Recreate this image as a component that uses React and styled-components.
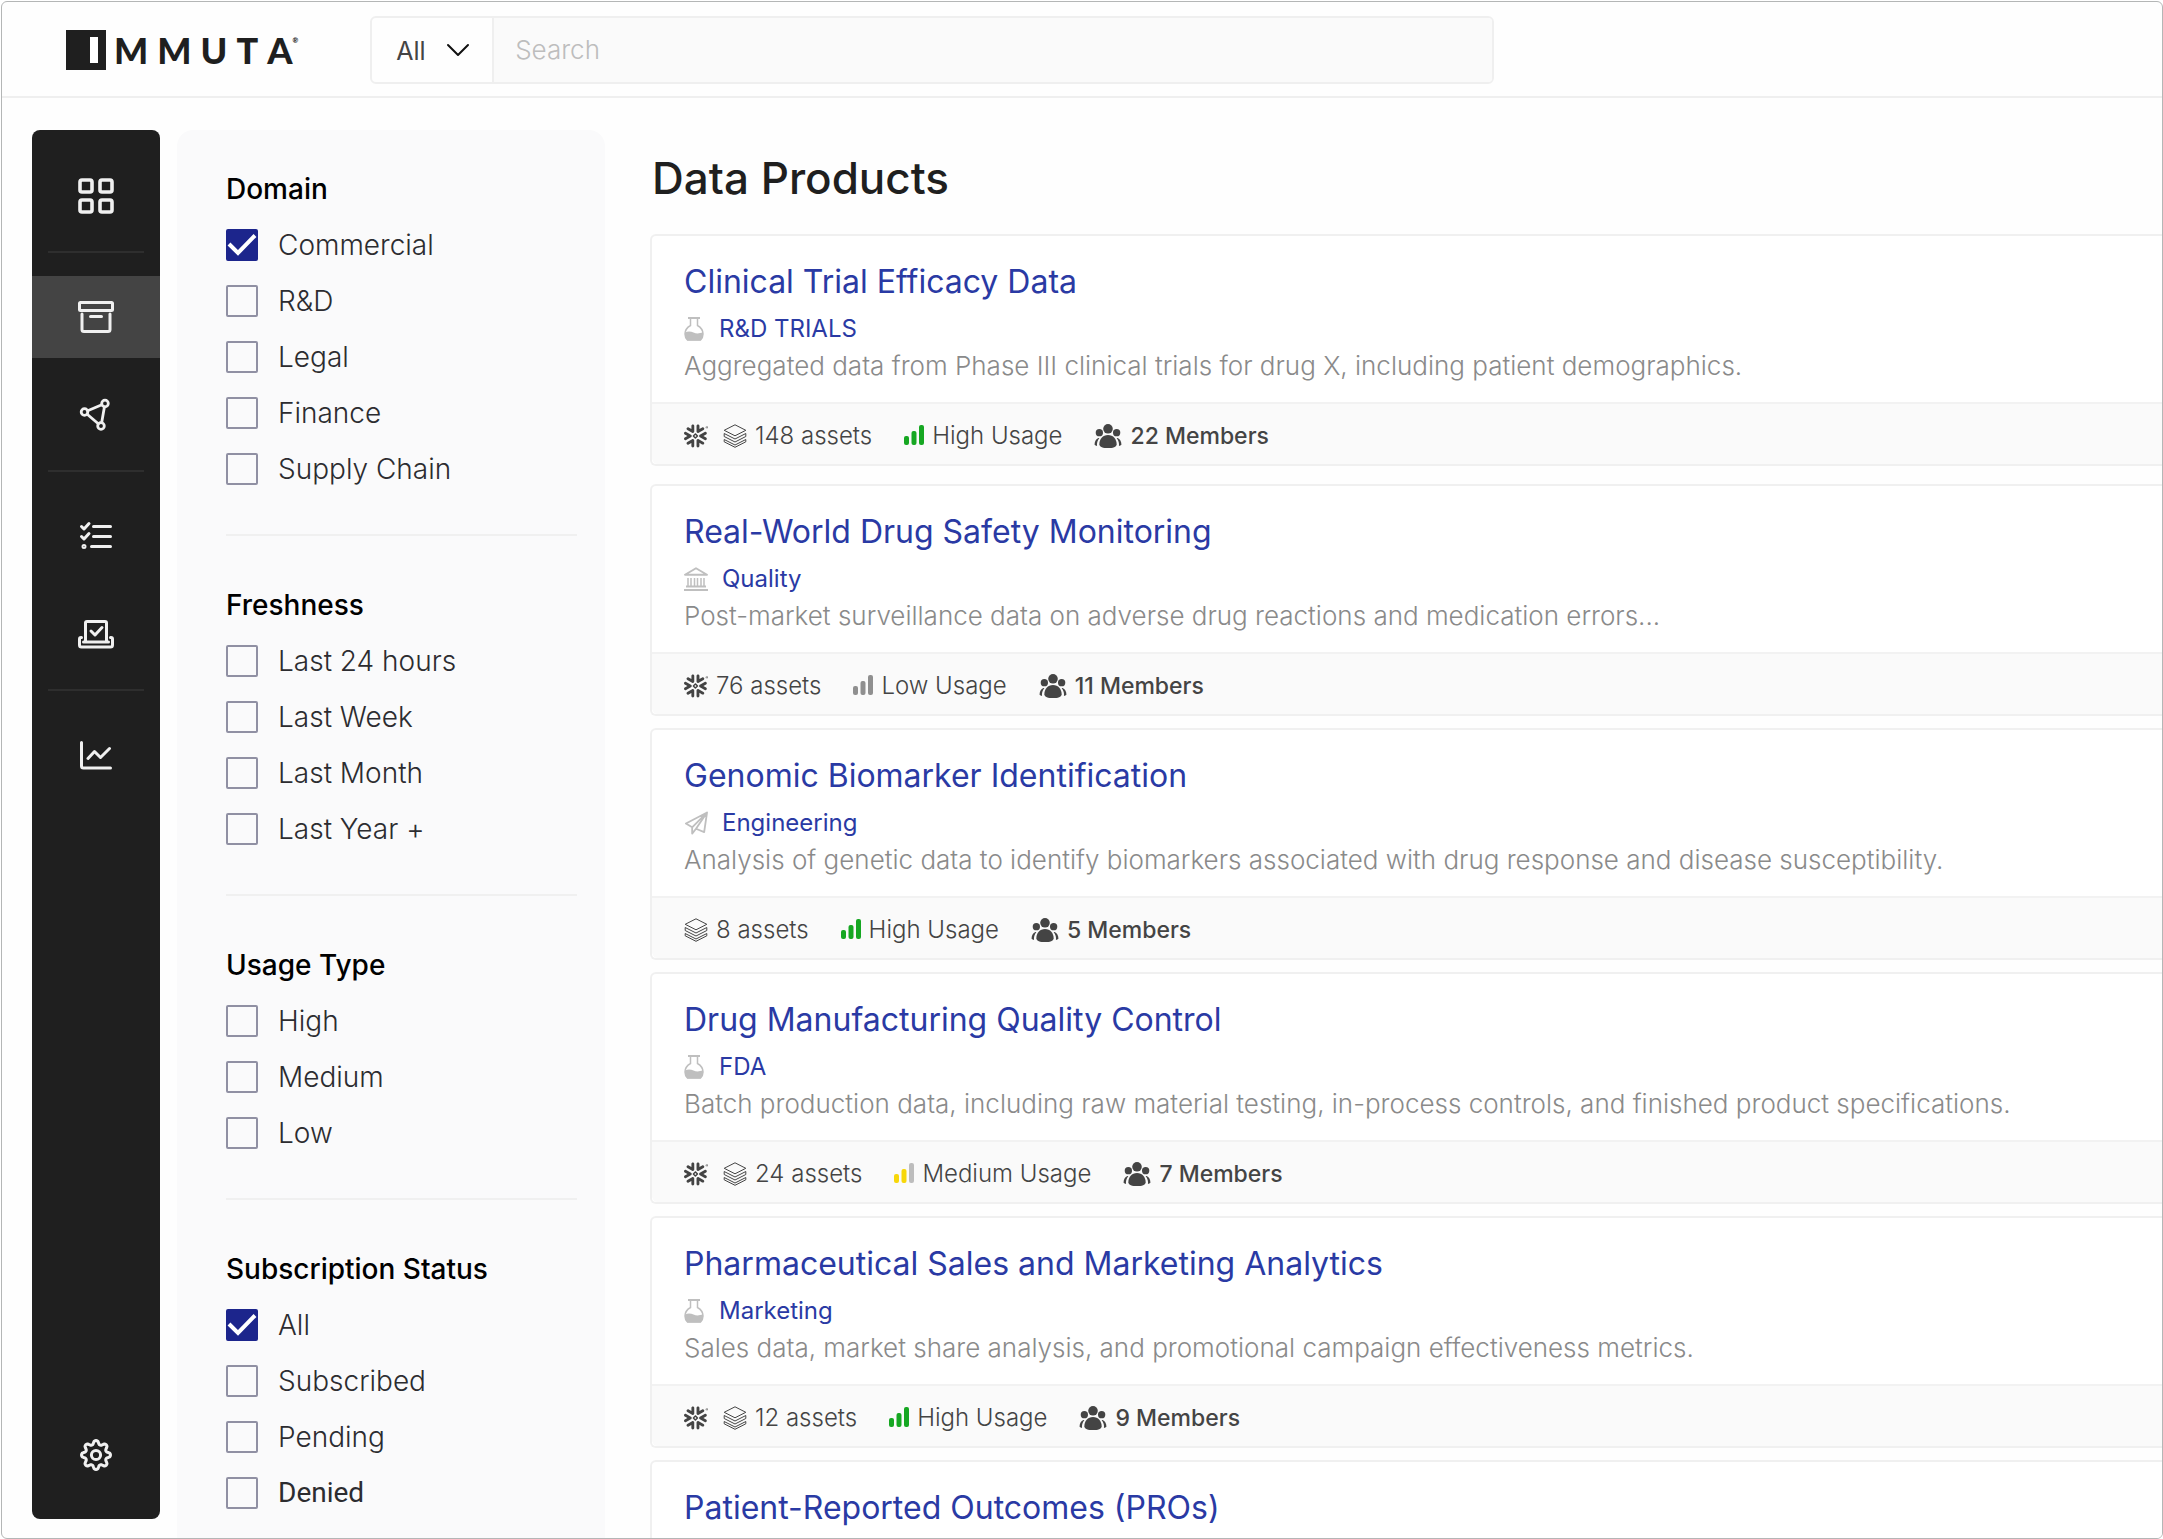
import React from "react";
import styled, { createGlobalStyle } from "styled-components";
import { SiSnowflake } from "react-icons/si";

const GlobalStyle = createGlobalStyle`
  *, *::before, *::after {
    box-sizing: border-box;
  }
  body {
    margin: 0;
    background: #ffffff;
    color: #1f1f1f;
    font-family: Inter, "Open Sans", sans-serif;
  }
  h1, h2, h3, p, ul, fieldset {
    margin: 0;
    padding: 0;
  }
`;

const Page = styled.div`
  height: 100vh;
  padding: 1px 0 0 1px;
`;

const Frame = styled.div`
  height: 100%;
  display: flex;
  flex-direction: column;
  overflow: hidden;
  border: 1px solid #b4b6b6;
  border-radius: 6px;
  background: #fefefe;
`;

const Header = styled.header`
  flex: none;
  display: flex;
  align-items: center;
  gap: 72px;
  height: 96px;
  padding: 2px 64px 0;
  border-bottom: 2px solid #efefef;
`;

const Logo = styled.a`
  display: flex;
  align-items: center;
  gap: 8px;
  color: #1f1f1f;
  text-decoration: none;
`;

const LogoMark = styled.svg`
  display: block;
  width: 40px;
  height: 40px;
`;

const Wordmark = styled.span`
  display: flex;
  gap: 9px;
  font: 900 36px/40px Lato, sans-serif;
`;

const Registered = styled.sup`
  margin-left: -9px;
  font-size: 7px;
  line-height: 20px;
`;

const SearchBar = styled.form`
  display: flex;
  flex: 1;
  max-width: 1124px;
  height: 68px;
  overflow: hidden;
  border: 2px solid #efefef;
  border-radius: 6px;
`;

const ScopeField = styled.div`
  display: grid;
  align-items: center;
  width: 122px;
  border-right: 2px solid #efefef;

  > * {
    grid-area: 1 / 1;
  }
`;

const ScopeSelect = styled.select`
  appearance: none;
  width: 100%;
  height: 100%;
  padding: 2px 24px 0;
  border: 0;
  background: transparent;
  color: #444444;
  font: 400 25px/32px Inter, sans-serif;
`;

const Chevron = styled.svg`
  justify-self: end;
  width: 24px;
  height: 24px;
  margin-right: 22px;
  pointer-events: none;
`;

const SearchInput = styled.input`
  flex: 1;
  min-width: 0;
  padding: 0 21px;
  border: 0;
  background: #fafafa;
  font: 300 26px/32px Inter, sans-serif;

  &::placeholder {
    color: #bdbdbd;
    opacity: 1;
  }
`;

const Body = styled.div`
  flex: 1;
  min-height: 0;
  display: grid;
  grid-template-columns: 128px 428px minmax(0, 1fr);
  grid-template-rows: minmax(0, 1fr);
  padding: 32px 0 0 30px;
`;

const Sidebar = styled.nav`
  display: flex;
  flex-direction: column;
  gap: 16px;
  margin-bottom: 19px;
  padding: 25px 0 23px;
  border-radius: 8px;
  background: #1f1f1f;
`;

const NavButton = styled.button`
  display: flex;
  flex: none;
  align-items: center;
  justify-content: center;
  width: 100%;
  height: 82px;
  padding: 0;
  border: 0;
  background: ${({ $active }) => ($active ? "#444444" : "transparent")};
  color: #f0f0f0;
`;

const NavDivider = styled.hr`
  flex: none;
  width: 96px;
  height: 2px;
  margin: -2px auto 7px;
  border: 0;
  background: #2e2e2e;
`;

const Spacer = styled.div`
  flex: 1;
`;

const LineIcon = styled.svg`
  display: block;
  width: 36px;
  height: 36px;
  fill: none;
  stroke: currentColor;
  stroke-width: ${({ $weight }) => $weight || 3};
  stroke-linecap: round;
  stroke-linejoin: round;
`;

const Filters = styled.aside`
  margin-left: 17px;
  margin-right: -17px;
  padding: 31px 28px 0 49px;
  overflow: hidden;
  border-radius: 16px 16px 0 0;
  background: #fafafb;
`;

const FilterSection = styled.fieldset`
  min-width: 0;
  margin-bottom: 41px;
  padding-bottom: 37px;
  border: 0;
  border-bottom: 2px solid #f0f0f0;
`;

const FilterTitle = styled.legend`
  padding: 0;
  color: #000000;
  font-size: 28px;
  font-weight: 500;
  line-height: 56px;
`;

const CheckRow = styled.label`
  display: flex;
  align-items: center;
  gap: 20px;
  height: 56px;
  color: #2c2c30;
  font-family: ${({ $plain }) => ($plain ? "Roboto" : "Inter")}, sans-serif;
  font-size: 28px;
  font-weight: ${({ $plain }) => ($plain ? 400 : 300)};
  line-height: 56px;
`;

const CheckField = styled.span`
  display: grid;
  flex: none;
  width: 32px;
  height: 32px;

  > * {
    grid-area: 1 / 1;
  }
`;

const CheckInput = styled.input`
  appearance: none;
  width: 32px;
  height: 32px;
  margin: 0;
  border: 2px solid #9090a3;
  border-radius: 2px;

  &:checked {
    border-color: #1c258c;
    background: #1c258c;
  }
`;

const CheckMark = styled.svg`
  width: 32px;
  height: 32px;
  fill: none;
  stroke: #ffffff;
  stroke-width: 4;
  pointer-events: none;

  input:not(:checked) + & {
    display: none;
  }
`;

const Main = styled.main`
  margin-left: 62px;
  overflow: hidden;
`;

const PageTitle = styled.h1`
  height: 104px;
  padding: 20px 0 0 2px;
  color: #1f1f1f;
  font-size: 44px;
  font-weight: 500;
  line-height: 56px;
`;

const ProductList = styled.ul`
  list-style: none;
`;

const Card = styled.li`
  margin-bottom: 12px;
  border: 2px solid #f0f0f0;
  border-right: 0;
  border-radius: 6px 0 0 6px;
  background: #ffffff;

  &:first-child {
    margin-bottom: 18px;
  }
`;

const CardBody = styled.div`
  padding: 24px 32px 20px;
`;

const CardTitle = styled.h2`
  font-size: 32px;
  font-weight: 400;
  line-height: 44px;
`;

const TextLink = styled.a`
  color: #2a3aa4;
  text-decoration: none;
`;

const Category = styled.p`
  display: flex;
  align-items: center;
  gap: 14px;
  height: 46px;
  padding-top: 4px;
  font-size: 24px;
  line-height: 32px;
`;

const Description = styled.p`
  color: #8a8a8a;
  font-size: 26px;
  font-weight: 300;
  line-height: 32px;
`;

const CardFooter = styled.div`
  display: flex;
  align-items: center;
  gap: 32px;
  height: 62px;
  padding: 4px 32px 0;
  border-top: 2px solid #f2f2f2;
  border-bottom-left-radius: 6px;
  background: #fafafa;
  color: #444444;
  font-size: 24px;
  line-height: 32px;
`;

const Stat = styled.span`
  display: flex;
  align-items: center;
  gap: 8px;
  font-size: ${({ $strong }) => ($strong ? "23px" : "24px")};
  font-weight: ${({ $strong }) => ($strong ? 500 : 300)};
`;

const SourceIcons = styled.span`
  display: flex;
  gap: 15px;
`;

const CategorySvg = styled.svg`
  display: block;
  height: 24px;
  color: #bfbfbf;
`;

const Glyph = styled.svg`
  display: block;
  height: 24px;
`;

/* eight rounded teeth around the hub */
const gearPath =
  Array.from({ length: 96 }, (_, i) => {
    const angle = (i / 96) * Math.PI * 2;
    const wave = Math.cos(angle * 8);
    const r = 12.6 + 1.9 * Math.sign(wave) * Math.pow(Math.abs(wave), 0.6);
    const x = (18 + r * Math.sin(angle)).toFixed(2);
    const y = (18 - r * Math.cos(angle)).toFixed(2);
    return `${i ? "L" : "M"}${x} ${y}`;
  }).join(" ") + "Z";

const GridIcon = () => (
  <LineIcon viewBox="0 0 36 36" $weight={3.6}>
    <rect x="2" y="2" width="12" height="12" rx="2" />
    <rect x="22" y="2" width="12" height="12" rx="2" />
    <rect x="2" y="22" width="12" height="12" rx="2" />
    <rect x="22" y="22" width="12" height="12" rx="2" />
  </LineIcon>
);

const ArchiveIcon = () => (
  <LineIcon viewBox="0 0 36 36">
    <rect x="1.5" y="3.5" width="33" height="8" rx="1" />
    <path d="M4 15v15.500q0 2 2 2h24q2 0 2-2V15M12.500 17.500h11" />
  </LineIcon>
);

const GraphIcon = () => (
  <LineIcon viewBox="0 0 36 36" $weight={2.8}>
    <circle cx="6.500" cy="15" r="3.300" />
    <circle cx="27" cy="6.500" r="3.300" />
    <circle cx="23" cy="29" r="3.300" />
    <path d="M9.700 13.700 23.800 7.800M9.200 17.200 20.300 26.800M26.400 9.900 23.700 25.600" />
  </LineIcon>
);

const ChecklistIcon = () => (
  <LineIcon viewBox="0 0 36 36">
    <path d="M3.500 8.500 6 11l5-5.500M3.500 18.500 6 21l5-5.500M15.500 8.500h17M15.500 18.500h17M13.500 28.500h19" />
    <circle cx="6" cy="28.500" r="1" />
  </LineIcon>
);

const LaptopIcon = () => (
  <LineIcon viewBox="0 0 36 36">
    <path d="M7.500 25.500V7q0-1.500 1.500-1.500h18q1.500 0 1.500 1.500v18.500M5.500 26h25" />
    <path d="M3.500 21.500H3q-1.500 0-1.500 1.500v6q0 2 2 2h29q2 0 2-2v-6q0-1.500-1.500-1.500h-.5M13 15l4 4 7-7.500" />
  </LineIcon>
);

const ChartIcon = () => (
  <LineIcon viewBox="0 0 36 36">
    <path d="M3.500 5.500V29q0 2 2 2h27M10 21.500l6.500-7 6 6 9-9" />
  </LineIcon>
);

const GearIcon = () => (
  <LineIcon viewBox="0 0 36 36">
    <path d={gearPath} />
    <circle cx="18" cy="18" r="4.600" />
  </LineIcon>
);

const FlaskIcon = () => (
  <CategorySvg width="21" viewBox="0 0 21 24" fill="none" stroke="currentColor">
    <path d="M4 1h12" strokeWidth="2" />
    <path
      d="M6.500 1v7.500C3 10.500 1 13.500 1 17c0 2.500 1 4.500 2.500 6h13c1.500-1.500 2.500-3.500 2.500-6 0-3.500-2-6.500-5.500-8.500V1"
      strokeWidth="1.500"
    />
    <path
      d="M1 15.500c3-1.500 6-1 8.500 0s5.500 1.500 9.500-.5c.3 4-.7 6.500-2.500 8.500h-13C1.700 21.500.7 19 1 15.500z"
      fill="currentColor"
      stroke="none"
    />
  </CategorySvg>
);

const BankIcon = () => (
  <CategorySvg width="24" viewBox="0 0 24 24" fill="none" stroke="currentColor">
    <path d="M1 7.800h22L12 1.200z" strokeWidth="1.900" strokeLinejoin="round" />
    <path d="M4 11v8M7 11v8M10.500 11v8M13.500 11v8M17 11v8M20 11v8" strokeWidth="1.500" />
    <path d="M2 19.500h20M0 23h24" strokeWidth="1.800" />
  </CategorySvg>
);

const PlaneIcon = () => (
  <CategorySvg width="24" viewBox="1 0 25 24" fill="none" stroke="currentColor">
    <path
      d="M25 1 3 12.500l6.500 4L25 1l-3 20.500-8.500-3.500L25 1M9.500 16.500V23l4-5"
      strokeWidth="1.900"
      strokeLinejoin="round"
    />
  </CategorySvg>
);

const LayersIcon = () => (
  <Glyph width="24" viewBox="0 0 24 24" fill="none" stroke="currentColor">
    <path
      d="M12 .8 22.800 6.300 12 11.800 1.200 6.300zM1.200 9.500 12 15l10.800-5.500v3L12 18 1.200 12.500zM1.200 15.500 12 21l10.800-5.500v2.300L12 23.300 1.200 17.800z"
      strokeWidth="1"
      strokeLinejoin="round"
    />
  </Glyph>
);

const MembersIcon = () => (
  <Glyph width="28" viewBox="0 0 28 25" fill="currentColor">
    <circle cx="14" cy="5" r="5" />
    <circle cx="5" cy="9" r="3.800" />
    <circle cx="23" cy="9" r="3.800" />
    <path d="M14 11.500c5.500 0 9 4.500 9 9.500 0 3-4 4-9 4s-9-1-9-4c0-5 3.500-9.500 9-9.500z" />
    <path d="M4 14.500C1.500 15.500 0 18 0 21.500c.7.700 1.500 1.200 2.600 1.500-.4-3 .3-6 2.400-8.500zM24 14.500c2.500 1 4 3.500 4 7-.7.700-1.500 1.200-2.600 1.500.4-3-.3-6-2.400-8.500z" />
  </Glyph>
);

const usageColors = {
  High: ["#16a722", "#16a722", "#16a722"],
  Medium: ["#f7d70a", "#f7d70a", "#bdbdbd"],
  Low: ["#8f8f8f", "#8f8f8f", "#8f8f8f"],
};

const UsageIcon = ({ level }) => {
  const [first, second, third] = usageColors[level];
  return (
    <Glyph width="20" viewBox="0 0 20 24">
      <rect x="0" y="12" width="5" height="9" rx="2" fill={first} />
      <rect x="7.500" y="7" width="5" height="14" rx="2" fill={second} />
      <rect x="15" y="1" width="5" height="20" rx="2" fill={third} />
    </Glyph>
  );
};

const categoryIcons = { flask: FlaskIcon, bank: BankIcon, plane: PlaneIcon };

const filters = [
  {
    title: "Domain",
    options: ["Commercial", "R&D", "Legal", "Finance", "Supply Chain"],
    checked: "Commercial",
  },
  {
    title: "Freshness",
    options: ["Last 24 hours", "Last Week", "Last Month", "Last Year +"],
  },
  { title: "Usage Type", options: ["High", "Medium", "Low"] },
  {
    title: "Subscription Status",
    options: ["All", "Subscribed", "Pending", "Denied"],
    checked: "All",
  },
];

const products = [
  {
    title: "Clinical Trial Efficacy Data",
    icon: "flask",
    category: "R&D TRIALS",
    text: "Aggregated data from Phase III clinical trials for drug X, including patient demographics.",
    sources: ["snowflake", "layers"],
    assets: 148,
    usage: "High",
    members: 22,
  },
  {
    title: "Real-World Drug Safety Monitoring",
    icon: "bank",
    category: "Quality",
    text: "Post-market surveillance data on adverse drug reactions and medication errors...",
    sources: ["snowflake"],
    assets: 76,
    usage: "Low",
    members: 11,
  },
  {
    title: "Genomic Biomarker Identification",
    icon: "plane",
    category: "Engineering",
    text: "Analysis of genetic data to identify biomarkers associated with drug response and disease susceptibility.",
    sources: ["layers"],
    assets: 8,
    usage: "High",
    members: 5,
  },
  {
    title: "Drug Manufacturing Quality Control",
    icon: "flask",
    category: "FDA",
    text: "Batch production data, including raw material testing, in-process controls, and finished product specifications.",
    sources: ["snowflake", "layers"],
    assets: 24,
    usage: "Medium",
    members: 7,
  },
  {
    title: "Pharmaceutical Sales and Marketing Analytics",
    icon: "flask",
    category: "Marketing",
    text: "Sales data, market share analysis, and promotional campaign effectiveness metrics.",
    sources: ["snowflake", "layers"],
    assets: 12,
    usage: "High",
    members: 9,
  },
  { title: "Patient-Reported Outcomes (PROs)" },
];

const FilterGroup = ({ title, options, checked }) => (
  <FilterSection>
    <FilterTitle>{title}</FilterTitle>
    {options.map((option) => (
      <CheckRow key={option} $plain={option === "Denied"}>
        <CheckField>
          <CheckInput type="checkbox" defaultChecked={option === checked} />
          <CheckMark viewBox="0 0 32 32">
            <path d="M3 15l9 9L29 6.500" />
          </CheckMark>
        </CheckField>
        {option}
      </CheckRow>
    ))}
  </FilterSection>
);

const ProductCard = ({ title, icon, category, text, sources, assets, usage, members }) => {
  const CategoryIcon = categoryIcons[icon];
  return (
    <Card>
      <CardBody>
        <CardTitle>
          <TextLink href="#">{title}</TextLink>
        </CardTitle>
        {category && (
          <Category>
            <CategoryIcon />
            <TextLink href="#">{category}</TextLink>
          </Category>
        )}
        {text && <Description>{text}</Description>}
      </CardBody>
      {sources && (
        <CardFooter>
          <Stat>
            <SourceIcons>
              {sources.includes("snowflake") && <SiSnowflake size={24} />}
              {sources.includes("layers") && <LayersIcon />}
            </SourceIcons>
            {assets} assets
          </Stat>
          <Stat>
            <UsageIcon level={usage} />
            {usage} Usage
          </Stat>
          <Stat $strong>
            <MembersIcon />
            {members} Members
          </Stat>
        </CardFooter>
      )}
    </Card>
  );
};

export default function App() {
  return (
    <>
      <GlobalStyle />
      <Page>
        <Frame>
          <Header>
            <Logo href="#" aria-label="Immuta">
              <LogoMark viewBox="0 0 40 40">
                <rect width="40" height="40" fill="#1f1f1f" />
                <rect x="24" y="7" width="8" height="26" fill="#ffffff" />
              </LogoMark>
              <Wordmark>
                {["M", "M", "U", "T", "A"].map((letter, i) => (
                  <span key={i}>{letter}</span>
                ))}
                <Registered>®</Registered>
              </Wordmark>
            </Logo>
            <SearchBar role="search">
              <ScopeField>
                <ScopeSelect aria-label="Search scope">
                  <option>All</option>
                </ScopeSelect>
                <Chevron viewBox="0 0 24 24" fill="none" stroke="#111111" strokeWidth="2">
                  <path d="M2 7l10 10L22 7" strokeLinecap="round" strokeLinejoin="round" />
                </Chevron>
              </ScopeField>
              <SearchInput type="search" placeholder="Search" aria-label="Search" />
            </SearchBar>
          </Header>
          <Body>
            <Sidebar aria-label="Main">
              <NavButton aria-label="Dashboard"><GridIcon /></NavButton>
              <NavDivider />
              <NavButton aria-label="Data products" $active><ArchiveIcon /></NavButton>
              <NavButton aria-label="Lineage"><GraphIcon /></NavButton>
              <NavDivider />
              <NavButton aria-label="Requests"><ChecklistIcon /></NavButton>
              <NavButton aria-label="Approvals"><LaptopIcon /></NavButton>
              <NavDivider />
              <NavButton aria-label="Reports"><ChartIcon /></NavButton>
              <Spacer />
              <NavButton aria-label="Settings"><GearIcon /></NavButton>
            </Sidebar>
            <Filters aria-label="Filters">
              {filters.map((group) => (
                <FilterGroup key={group.title} {...group} />
              ))}
            </Filters>
            <Main>
              <PageTitle>Data Products</PageTitle>
              <ProductList>
                {products.map((product) => (
                  <ProductCard key={product.title} {...product} />
                ))}
              </ProductList>
            </Main>
          </Body>
        </Frame>
      </Page>
    </>
  );
}
